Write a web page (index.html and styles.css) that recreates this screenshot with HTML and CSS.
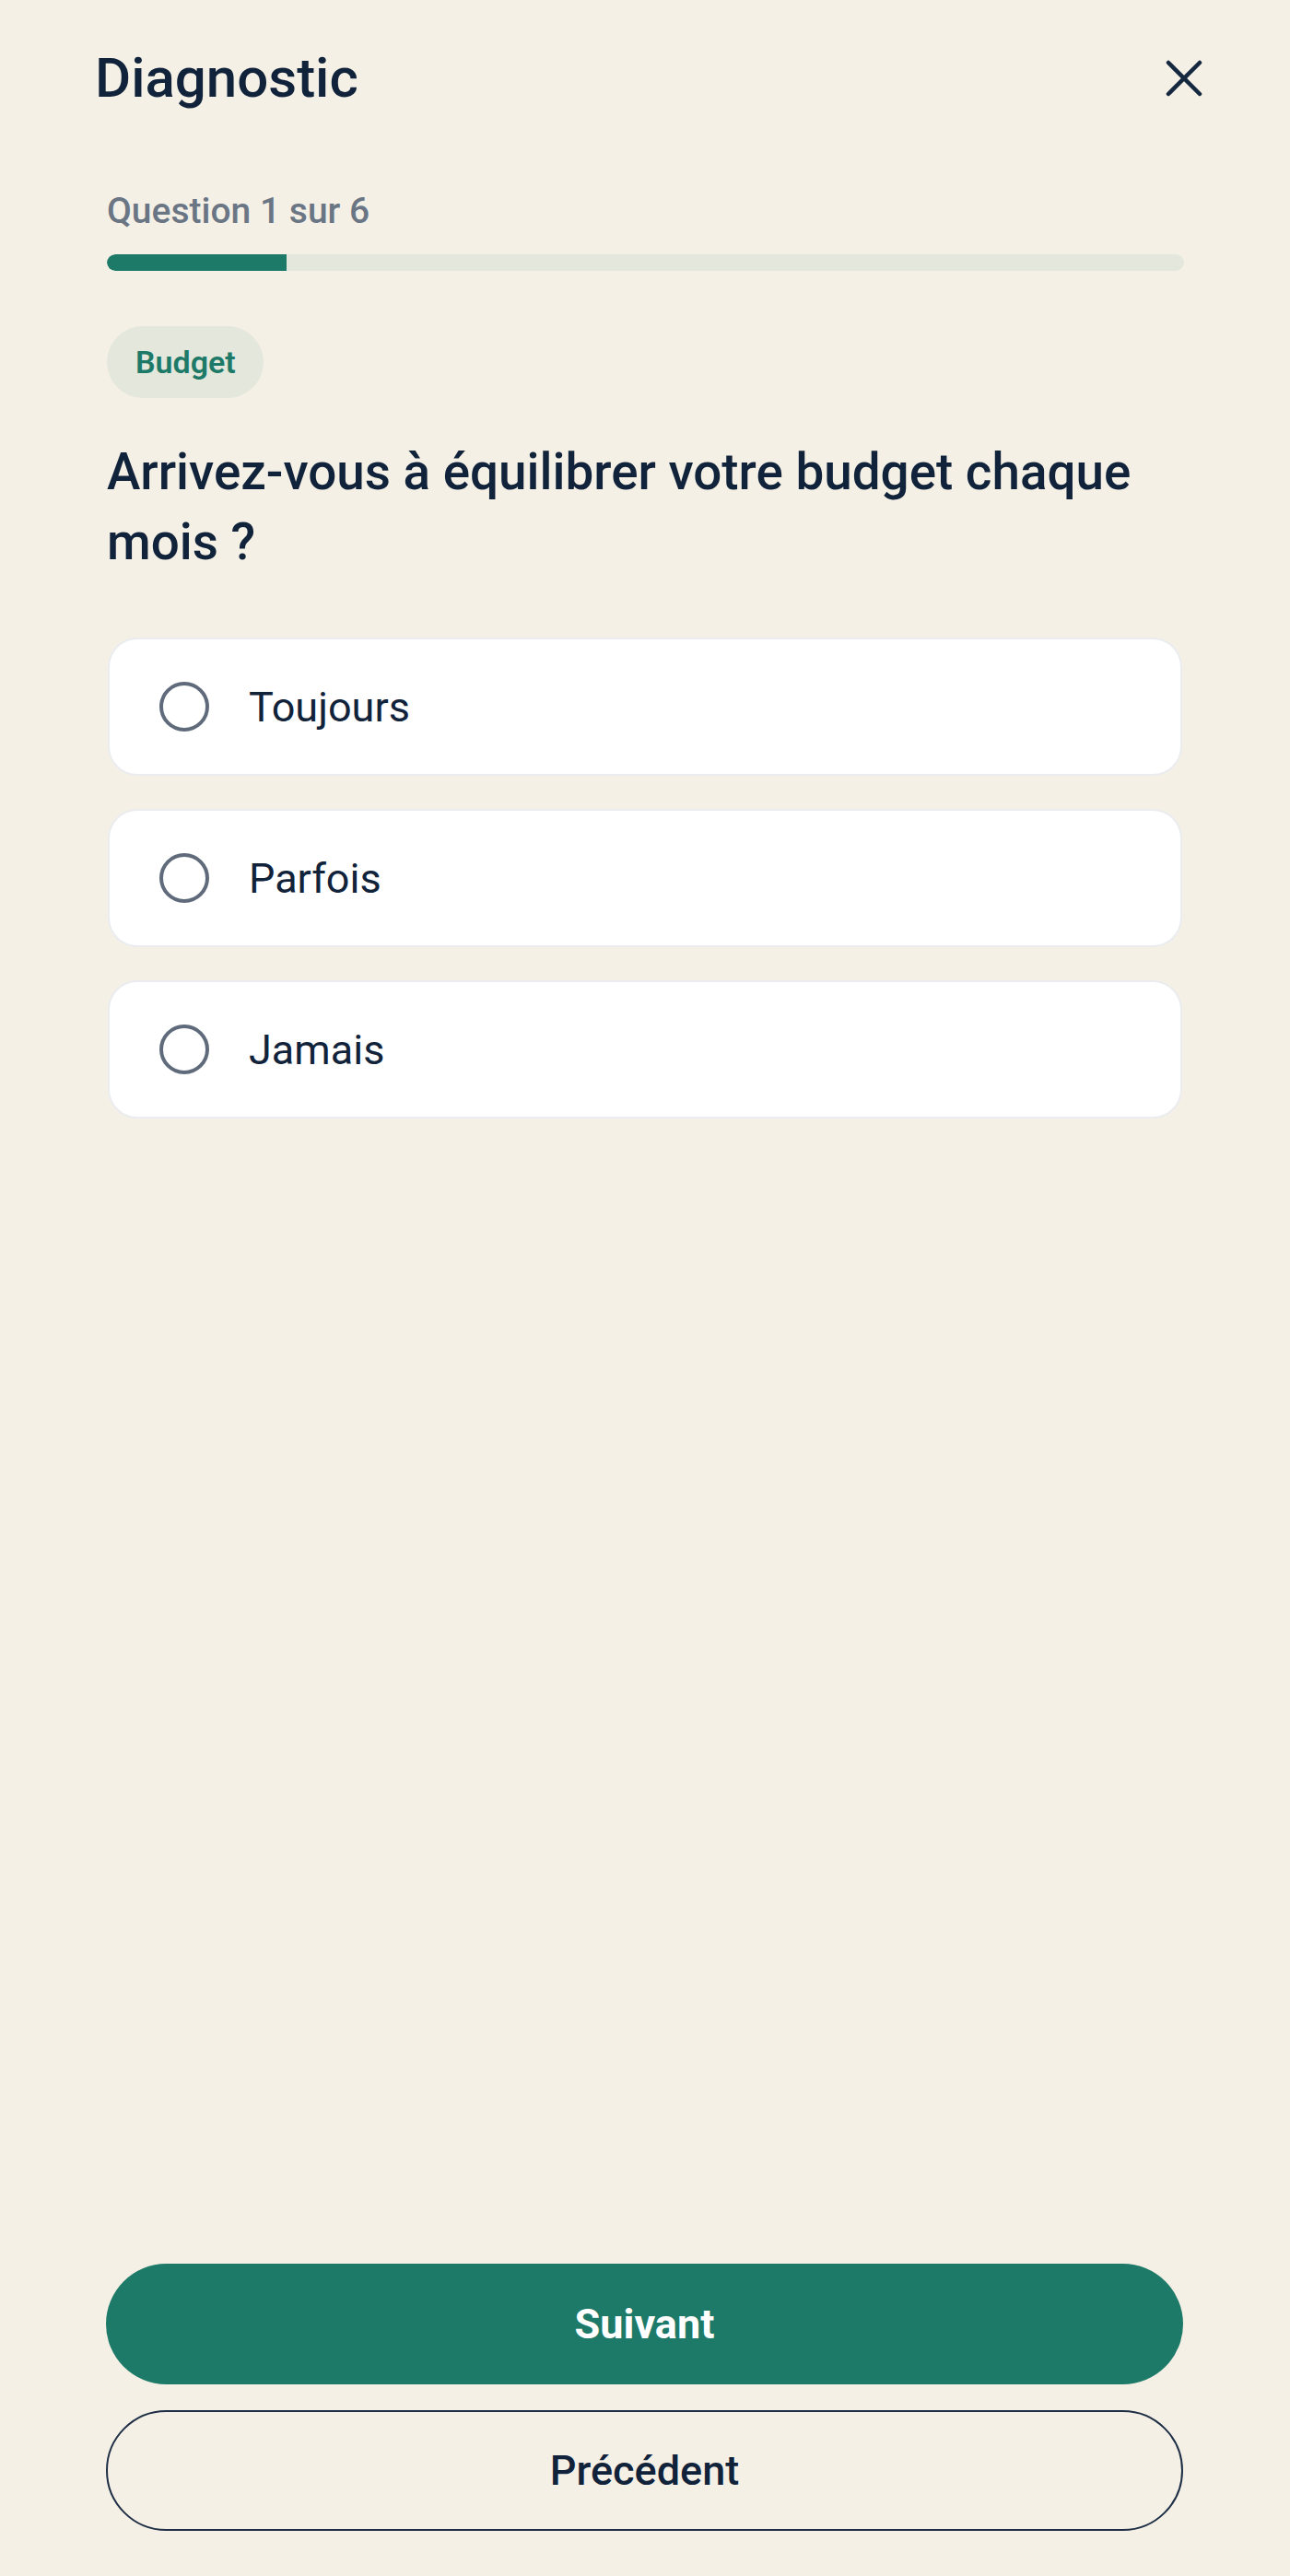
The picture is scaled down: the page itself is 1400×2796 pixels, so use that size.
FILE: index.html
```html
<!DOCTYPE html>
<html lang="fr">
<head>
    <meta charset="UTF-8">
    <meta name="viewport" content="width=device-width, initial-scale=1.0">
    <title>Diagnostic</title>
    <link rel="stylesheet" href="styles.css">
</head>
<body>
    <div class="screen">
        <header class="header">
            <h1>Diagnostic</h1>
            <button class="close" aria-label="Fermer">
                <svg width="40" height="40" viewBox="0 0 40 40" fill="none" stroke="currentColor" stroke-width="4.5" stroke-linecap="round">
                    <line x1="3" y1="3" x2="37" y2="37"/>
                    <line x1="37" y1="3" x2="3" y2="37"/>
                </svg>
            </button>
        </header>

        <main class="content">
            <p class="step">Question 1 sur 6</p>
            <div class="progress">
                <div class="progress-fill" style="width: 16.67%;"></div>
            </div>

            <span class="badge">Budget</span>

            <h2 class="question">Arrivez-vous à équilibrer votre budget chaque mois ?</h2>

            <div class="options">
                <label class="option">
                    <span class="radio"></span>
                    <span class="option-text">Toujours</span>
                </label>
                <label class="option">
                    <span class="radio"></span>
                    <span class="option-text">Parfois</span>
                </label>
                <label class="option">
                    <span class="radio"></span>
                    <span class="option-text">Jamais</span>
                </label>
            </div>
        </main>

        <footer class="actions">
            <button class="btn btn-primary">Suivant</button>
            <button class="btn btn-outline">Précédent</button>
        </footer>
    </div>
</body>
</html>
```

FILE: styles.css
```css
* {
    box-sizing: border-box;
}
body {
    margin: 0;
    background: #f5f0e6;
    font-family: Roboto, "Liberation Sans", sans-serif;
    color: #11233a;
}
.screen {
    display: flex;
    flex-direction: column;
    min-height: 100vh;
}
.header {
    display: flex;
    justify-content: space-between;
    align-items: center;
    padding: 50px 95px 0 103px;
}
.header h1 {
    margin: 0;
    font-size: 60px;
    line-height: 70px;
    font-weight: 500;
    color: #11233a;
}
.close {
    background: none;
    border: none;
    padding: 0;
    color: #15283f;
    display: flex;
    cursor: pointer;
}
.content {
    padding: 86px 115px 0 116px;
}
.step {
    margin: 0;
    font-size: 39px;
    line-height: 46px;
    font-weight: 500;
    color: #6b7685;
}
.progress {
    margin-top: 24px;
    height: 18px;
    background: #e3e7dc;
    border-radius: 9px;
    overflow: hidden;
}
.progress-fill {
    height: 100%;
    background: #1e7a68;
    border-radius: 9px 0 0 9px;
}
.badge {
    display: inline-block;
    margin-top: 60px;
    padding: 19px 30px 19px 31px;
    font-size: 34px;
    line-height: 40px;
    font-weight: 600;
    color: #1e7a68;
    background: #e3e7dc;
    border-radius: 40px;
}
.question {
    margin: 42px 0 0;
    font-size: 54.8px;
    line-height: 76px;
    font-weight: 500;
    color: #11233a;
}
.options {
    display: flex;
    flex-direction: column;
    gap: 36px;
    margin-top: 66px;
}
.option {
    display: flex;
    align-items: center;
    gap: 43px;
    height: 150px;
    padding-left: 54px;
    margin: 0 2px 0 1px;
    background: #fff;
    border: 2px solid #eaecef;
    border-radius: 32px;
    cursor: pointer;
}
.radio {
    width: 54px;
    height: 54px;
    border: 4px solid #5f6b7b;
    border-radius: 50%;
    flex-shrink: 0;
}
.option-text {
    font-size: 45px;
    color: #11233a;
}
.actions {
    margin-top: auto;
    display: flex;
    flex-direction: column;
    gap: 28px;
    padding: 0 116px 49px 115px;
}
.btn {
    height: 131px;
    border-radius: 66px;
    font-family: Roboto, "Liberation Sans", sans-serif;
    font-size: 45px;
    cursor: pointer;
}
.btn-primary {
    background: #1e7a68;
    color: #fff;
    border: none;
    font-weight: 700;
}
.btn-outline {
    background: transparent;
    color: #11233a;
    border: 2.5px solid #1e2f45;
    font-weight: 500;
}
```
